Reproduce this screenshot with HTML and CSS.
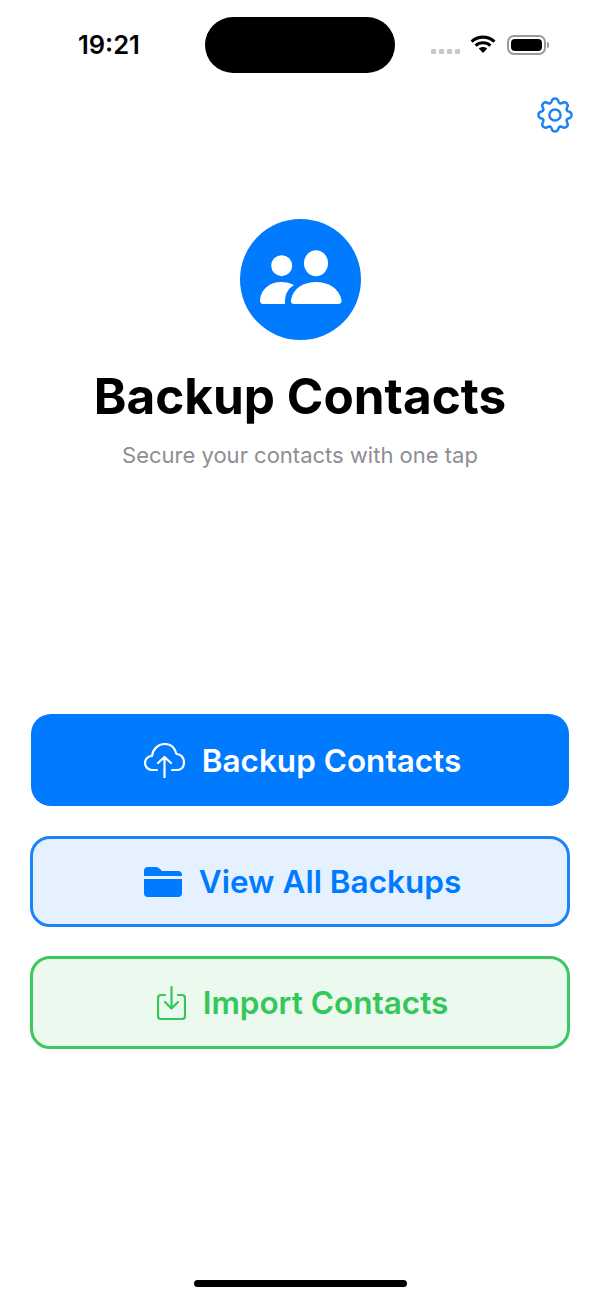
FILE: index.html
```html
<!DOCTYPE html>
<html lang="en">
<head>
    <meta charset="UTF-8">
    <title>Backup Contacts</title>
    <link rel="stylesheet" href="styles.css">
</head>
<body>
    <div class="status-bar">
        <div class="time">19:21</div>
        <div class="island"></div>
        <div class="status-icons">
            <div class="signal"><i></i><i></i><i></i><i></i></div>
            <svg class="wifi" viewBox="0 0 26 18" width="26" height="18">
                <path d="M1.6 6.6C8 .6 18 .6 24.4 6.6M5.6 10.6C9.8 6.8 16.2 6.8 20.4 10.6" fill="none" stroke="#000" stroke-width="3.2"/>
                <path d="M13 18L8.8 13.6C11.2 11.6 14.8 11.6 17.2 13.6Z" fill="#000"/>
            </svg>
            <div class="battery"><div class="battery-level"></div></div>
            <div class="battery-nub"></div>
        </div>
    </div>

    <div class="toolbar">
        <svg class="gear" viewBox="-18 -18 36 36" width="36" height="36">
            <defs>
                <path id="tooth" d="M-4.9-11.8C-3.2-12.2-3.4-14-2.8-15.2Q-2-16.6 0-16.6Q2-16.6 2.8-15.2C3.4-14 3.2-12.2 4.9-11.8"/>
            </defs>
            <g fill="none" stroke="#1a84f5" stroke-width="2.5" stroke-linecap="round">
                <use href="#tooth"/>
                <use href="#tooth" transform="rotate(45)"/>
                <use href="#tooth" transform="rotate(90)"/>
                <use href="#tooth" transform="rotate(135)"/>
                <use href="#tooth" transform="rotate(180)"/>
                <use href="#tooth" transform="rotate(225)"/>
                <use href="#tooth" transform="rotate(270)"/>
                <use href="#tooth" transform="rotate(315)"/>
                <circle r="5.6"/>
            </g>
        </svg>
    </div>

    <div class="hero">
        <div class="hero-circle">
            <svg viewBox="0 0 82 54" width="82" height="54" fill="#fff">
                <circle cx="21.7" cy="15.7" r="10.5"/>
                <ellipse cx="56" cy="13.3" rx="12" ry="13"/>
                <path d="M3 54H25C24.5 46 27 39 34 35C30 33 26 32 21 32C10 32 1 39 0 50Q0 54 3 54Z"/>
                <path d="M34 54H78Q82 54 81.5 50C79 38 68 32 56 32C44 32 33 38 31 50Q30.5 54 34 54Z"/>
            </svg>
        </div>
        <h1>Backup Contacts</h1>
        <p>Secure your contacts with one tap</p>
    </div>

    <div class="actions">
        <div class="btn btn-primary">
            <svg viewBox="0 0 41 35" width="41" height="35" fill="none" stroke="#fff" stroke-width="2.2" stroke-linecap="round" stroke-linejoin="round">
                <path d="M13 27H8C3.5 27 1 23.5 1 20C1 16 4 13 8 13C9 6 14 1 20.5 1C27 1 31 5 32.5 11C37 11 40 15 40 19.5C40 24 37 27 33 27H28"/>
                <path d="M20.5 35V14M14 20L20.5 14L27 20"/>
            </svg>
            <span>Backup Contacts</span>
        </div>
        <div class="btn btn-outline-blue">
            <svg viewBox="0 0 38 30" width="38" height="30" fill="#007aff">
                <path d="M0 4Q0 0 4 0H12Q14 0 16 2L18 4H34Q38 4 38 8V9H0Z"/>
                <path d="M0 12H38V26Q38 30 34 30H4Q0 30 0 26Z"/>
            </svg>
            <span>View All Backups</span>
        </div>
        <div class="btn btn-outline-green">
            <svg viewBox="0 0 29 34" width="29" height="34" fill="none" stroke="#34c759" stroke-width="2.2" stroke-linecap="round" stroke-linejoin="round">
                <path d="M8 9H4Q1 9 1 12V30Q1 33 4 33H25Q28 33 28 30V12Q28 9 25 9H21"/>
                <path d="M14.5 1V22M8 16L14.5 22.5L21 16"/>
            </svg>
            <span>Import Contacts</span>
        </div>
    </div>

    <div class="home-indicator"></div>
</body>
</html>
```

FILE: styles.css
```css
* { box-sizing: border-box; }
body { margin: 0; width: 600px; height: 1299px; background: #fff; font-family: Inter, "Liberation Sans", sans-serif; display: flex; flex-direction: column; overflow: hidden; }

.status-bar { display: grid; grid-template-columns: 205px 190px 205px; padding-top: 17px; height: 73px; }
.time { padding: 13px 0 0 78px; font-size: 25.5px; font-weight: 600; line-height: 29px; color: #000; }
.island { height: 56px; border-radius: 28px; background: #000; }
.status-icons { display: flex; align-items: flex-start; padding: 18px 0 0 36px; }
.signal { display: flex; gap: 3px; margin: 14px 10px 0 0; }
.signal i { width: 5px; height: 5px; border-radius: 1px; background: #c9c9cc; }
.wifi { margin-right: 11px; }
.battery { width: 39px; height: 20px; padding: 2px; border: 2px solid #9a9a9e; border-radius: 7px; }
.battery-level { height: 100%; border-radius: 4px; background: #000; }
.battery-nub { width: 2px; height: 6px; margin: 7px 0 0 1px; border-radius: 0 2px 2px 0; background: #9a9a9e; }

.toolbar { display: flex; justify-content: flex-end; padding: 24px 27px 0 0; height: 146px; }

.hero { display: flex; flex-direction: column; align-items: center; }
.hero-circle { width: 121px; height: 121px; padding: 0 0 5px 1px; border-radius: 50%; background: #007aff; display: flex; align-items: center; justify-content: center; }
.hero h1 { margin: 26px 0 0; font-size: 49.5px; line-height: 60px; font-weight: 700; color: #000; }
.hero p { margin: 16px 0 0; font-size: 22px; line-height: 27px; color: #8e8e93; }

.actions { display: flex; flex-direction: column; padding: 0 30px; margin-top: 245px; }
.btn { display: flex; align-items: center; justify-content: center; gap: 17px; padding-left: 5px; font-size: 31.5px; font-weight: 600; border-radius: 20px; }
.btn-primary { height: 92px; margin: 0 1px 30px; background: #007aff; color: #fff; }
.btn-outline-blue { height: 91px; margin-bottom: 29px; background: #e5f1ff; border: 3px solid #1a84f5; color: #007aff; }
.btn-outline-green { height: 93px; background: #ebf9ee; border: 3px solid #3cc75f; color: #34c759; }

.home-indicator { width: 213px; height: 7px; margin: auto auto 12px; border-radius: 4px; background: #000; }
```
